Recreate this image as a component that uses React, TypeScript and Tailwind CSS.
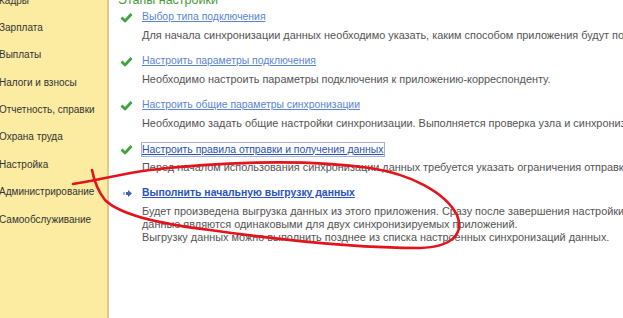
const menu = [
  "Кадры",
  "Зарплата",
  "Выплаты",
  "Налоги и взносы",
  "Отчетность, справки",
  "Охрана труда",
  "Настройка",
  "Администрирование",
  "Самообслуживание",
];

type Step = {
  title: string;
  lines: string[];
  done: boolean;
  focused?: boolean;
};

const steps: Step[] = [
  {
    title: "Выбор типа подключения",
    lines: ["Для начала синхронизации данных необходимо указать, каким способом приложения будут подключаться друг к другу."],
    done: true,
  },
  {
    title: "Настроить параметры подключения",
    lines: ["Необходимо настроить параметры подключения к приложению-корреспонденту."],
    done: true,
  },
  {
    title: "Настроить общие параметры синхронизации",
    lines: ["Необходимо задать общие настройки синхронизации. Выполняется проверка узла и синхронизация параметров."],
    done: true,
  },
  {
    title: "Настроить правила отправки и получения данных",
    lines: ["Перед началом использования синхронизации данных требуется указать ограничения отправки данных."],
    done: true,
    focused: true,
  },
  {
    title: "Выполнить начальную выгрузку данных",
    lines: [
      "Будет произведена выгрузка данных из этого приложения. Сразу после завершения настройки синхронизации",
      "данные являются одинаковыми для двух синхронизируемых приложений.",
      "Выгрузку данных можно выполнить позднее из списка настроенных синхронизаций данных.",
    ],
    done: false,
  },
];

function Check() {
  return (
    <svg width="13" height="11" viewBox="0 0 13 11">
      <path d="M1.5 5.5 L5 9 L11.5 2" fill="none" stroke="#3ea43e" strokeWidth="2.8" strokeLinejoin="round" />
    </svg>
  );
}

function Arrow() {
  return (
    <svg width="9" height="7" viewBox="0 0 9 7">
      <rect x="0" y="2" width="2" height="3" fill="#9db2dc" />
      <polygon points="3,2 5,2 5,0 9,3.5 5,7 5,5 3,5" fill="#3f63ad" />
    </svg>
  );
}

export default function App() {
  return (
    <div className="relative w-[623px] h-[318px] overflow-hidden bg-white font-['Liberation_Sans',Arial,sans-serif] text-[11px]">
      <div className="flex h-full">
        <aside className="w-[109px] shrink-0 bg-[#fbeca2] border-r-2 border-[#d9cc8e]">
          <ul className="-mt-[13.7px] -ml-[1px] text-[10px]">
            {menu.map((m) => (
              <li key={m} className="h-[27.4px] flex items-center whitespace-nowrap text-[#333]">
                {m}
              </li>
            ))}
          </ul>
        </aside>

        <main className="flex-1 pl-[9px] whitespace-nowrap">
          <h1 className="-mt-[10px] h-[19px] leading-[20px] text-[12.5px] text-[#4a9a40]">Этапы настройки</h1>
          <div className="flex flex-col gap-[11px]">
            {steps.map((s) => (
              <div key={s.title} className="flex">
                <div className="w-[24px] h-[16px] flex items-center pl-[2px]">
                  {s.done ? <Check /> : <div className="pl-[3px] flex"><Arrow /></div>}
                </div>
                <div className="text-[10.4px]">
                  <div className="h-[16px] flex items-center">
                    {s.focused ? (
                      <span className="-ml-[1px] border border-[#a3b1d2] leading-[13px] text-[#2b4fae] underline">
                        {s.title}
                      </span>
                    ) : s.done ? (
                      <span className="text-[#5a84d2] underline">{s.title}</span>
                    ) : (
                      <span className="font-bold text-[#2a52be] underline">{s.title}</span>
                    )}
                  </div>
                  <div className="mt-[4px] text-[10.9px] text-[#545454] leading-[13px]">
                    {s.lines.map((l) => (
                      <div key={l}>{l}</div>
                    ))}
                  </div>
                </div>
              </div>
            ))}
          </div>
        </main>
      </div>

      <svg className="absolute inset-0 pointer-events-none" width="623" height="318" viewBox="0 0 623 318">
        <path
          d="M73 184 C 95 181 120 174 150 170 C 210 163 300 158 370 168 C 410 174 445 192 457 215 C 465 235 450 247 420 248 C 360 248 280 240 210 230 C 160 224 120 215 105 200 C 97 190 94 180 92 170"
          fill="none"
          stroke="#e4121b"
          strokeWidth="2.6"
          strokeLinecap="round"
        />
      </svg>
    </div>
  );
}
